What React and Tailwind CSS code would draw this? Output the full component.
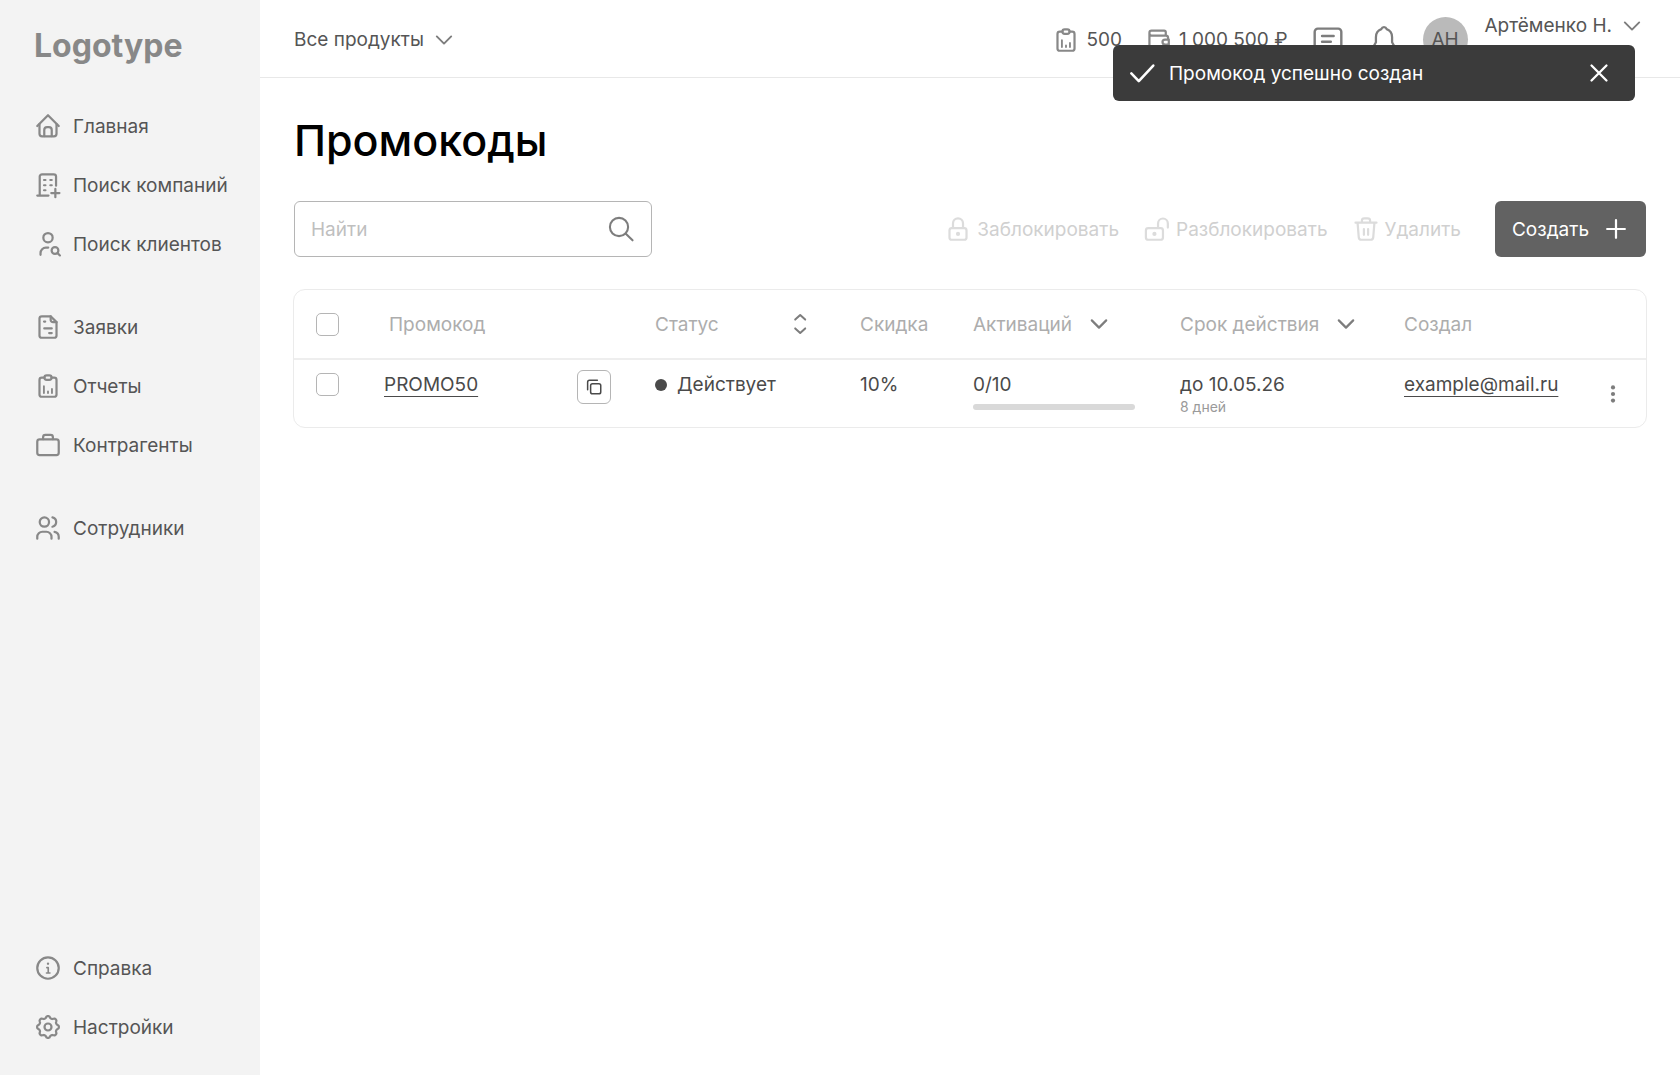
const GEAR_PATH = (() => {
    const points = [];
    for (let i = 0; i < 96; i++) {
        const angle = (i / 96) * Math.PI * 2;
        const radius = 8.5 + 0.9 * Math.tanh(1.6 * Math.cos(angle * 8));
        points.push(`${(12 + radius * Math.sin(angle)).toFixed(2)} ${(12 - radius * Math.cos(angle)).toFixed(2)}`);
    }
    return `M${points.join("L")}Z`;
})();

function Icon({ className = "size-7", strokeWidth = 1.9, children }) {
    return (
        <svg
            viewBox="0 0 24 24"
            fill="none"
            stroke="currentColor"
            strokeWidth={strokeWidth}
            strokeLinecap="round"
            strokeLinejoin="round"
            aria-hidden="true"
            className={`shrink-0 ${className}`}
        >
            {children}
        </svg>
    );
}

const HomeIcon = () => (
    <Icon>
        <path d="M2.8 12 12 2.8l9.2 9.2" />
        <path d="M4.7 10.4v8.2a2.2 2.2 0 0 0 2.2 2.2h10.2a2.2 2.2 0 0 0 2.2-2.2v-8.2" />
        <path d="M8.8 20.6v-5.2a2.4 2.4 0 0 1 2.4-2.4h1.6a2.4 2.4 0 0 1 2.4 2.4v5.2" />
    </Icon>
);

const CompanySearchIcon = () => (
    <Icon>
        <path d="M2.8 21.1h9.6M4.9 21V4.8a2 2 0 0 1 2-2h10a2 2 0 0 1 2 2v7.8" />
        <path d="M8.6 7.7h1.2M14 7.7h1.2M8.6 12.2h1.2M14 12.2h1.2M8.6 16.5h1.2" />
        <path d="M18.3 15.4v7M14.8 18.9h7" />
    </Icon>
);

const ClientSearchIcon = () => (
    <Icon>
        <circle cx="12" cy="6.6" r="4" />
        <path d="M5.6 21.3v-1.6a4.6 4.6 0 0 1 4.6-4.6h2" />
        <circle cx="18" cy="17.6" r="2.9" />
        <path d="m20.2 19.8 2 2" />
    </Icon>
);

const RequestIcon = () => (
    <Icon>
        <path d="M14.3 2.8H6.7a2 2 0 0 0-2 2v14.4a2 2 0 0 0 2 2h10.6a2 2 0 0 0 2-2V7.8z" />
        <path d="M14.3 2.8v3.1a2 2 0 0 0 2 2h3M8.6 7.3h1M8.8 13.2h6.4M13 17.2h2.2" />
    </Icon>
);

const ReportIcon = () => (
    <Icon>
        <path d="M9 4.8H6.7a2 2 0 0 0-2 2v12.4a2 2 0 0 0 2 2h10.6a2 2 0 0 0 2-2V6.8a2 2 0 0 0-2-2H15" />
        <rect x="8.9" y="2.8" width="6.2" height="4" rx="2" />
        <path d="M8.5 12.2V18M12 16.7V18M15.4 14.6V18" strokeWidth="1.6" />
    </Icon>
);

const BriefcaseIcon = () => (
    <Icon>
        <rect x="2.8" y="7.2" width="18.4" height="13.4" rx="2" />
        <path d="M7.8 7V5.4a2 2 0 0 1 2-2h4.4a2 2 0 0 1 2 2V7" />
    </Icon>
);

const StaffIcon = () => (
    <Icon>
        <circle cx="8.9" cy="6.9" r="4" />
        <path d="M2.8 21.2v-1.6a4.4 4.4 0 0 1 4.4-4.4h3.4a4.4 4.4 0 0 1 4.4 4.4v1.6M15.8 2.9a4.1 4.1 0 0 1 0 8M17.6 15.3a4.4 4.4 0 0 1 3.6 4.3v1.6" />
    </Icon>
);

const InfoIcon = () => (
    <Icon>
        <circle cx="12" cy="12" r="9.2" />
        <path d="M11 11.7h1.2v4.4M10.7 16.3h3" strokeWidth="1.4" />
        <circle cx="12" cy="8.3" r="1" fill="currentColor" stroke="none" />
    </Icon>
);

const SettingsIcon = () => (
    <Icon>
        <path d={GEAR_PATH} />
        <circle cx="12" cy="12" r="3" />
    </Icon>
);

const WalletIcon = () => (
    <Icon>
        <path d="M17.8 8.2V5.4a1.4 1.4 0 0 0-1.4-1.4H5.6A1.8 1.8 0 0 0 3.8 5.8v12.4a2 2 0 0 0 2 2h12a2 2 0 0 0 2-2V16M3.8 6.2a2 2 0 0 0 2 2h12a2 2 0 0 1 2 2v1" />
        <path d="M20.4 11.6h-3.2a2.2 2.2 0 0 0 0 4.4h3.2z" />
    </Icon>
);

const MessageIcon = () => (
    <Icon className="size-8.5" strokeWidth={1.7}>
        <path d="M4.8 4h14.4a2.2 2.2 0 0 1 2.2 2.2v9.6a2.2 2.2 0 0 1-2.2 2.2H9l-4.4 3.2V18a2 2 0 0 1-2-2V6.2A2.2 2.2 0 0 1 4.8 4z" />
        <path d="M7.8 9.2H16M7.8 13.2H14" />
    </Icon>
);

const BellIcon = () => (
    <Icon className="size-8.5" strokeWidth={1.6}>
        <path d="M12 2.9c1 0 1.6.6 1.9 1.4 2.2.8 3.8 3 3.8 5.7v3.6l1.9 3.4v1H4.4v-1l1.9-3.4V10c0-2.700 1.600-4.900 3.800-5.700.3-.8.9-1.400 1.900-1.400z" />
        <path d="M9.5 18.5a2.5 2.5 0 0 0 5 0" />
    </Icon>
);

const LockIcon = () => (
    <Icon>
        <rect x="4.7" y="11.2" width="14.6" height="10" rx="2" />
        <path d="M7.7 11V7.2a4.3 4.3 0 0 1 8.6 0V11" />
        <circle cx="12" cy="16.2" r="1.8" fill="currentColor" stroke="none" />
    </Icon>
);

const UnlockIcon = () => (
    <Icon>
        <rect x="2.5" y="11.2" width="14.6" height="10" rx="2" />
        <path d="M12.9 11V7.2a4.2 4.2 0 0 1 8.4 0v3.6" />
        <circle cx="9.8" cy="16.2" r="1.8" fill="currentColor" stroke="none" />
    </Icon>
);

const TrashIcon = () => (
    <Icon>
        <path d="M3 6.6h18M8.5 6.4V4.8a2 2 0 0 1 2-2h3a2 2 0 0 1 2 2v1.6M4.8 7l1 12.2a2.2 2.2 0 0 0 2.2 2h8a2.2 2.2 0 0 0 2.2-2l1-12.2M10.2 12v5M13.8 12v5" />
    </Icon>
);

const ChevronIcon = ({ className, strokeWidth = 1.9 }) => (
    <Icon className={className} strokeWidth={strokeWidth}>
        <path d="m4.8 8.4 7.2 7.2 7.2-7.2" />
    </Icon>
);

const navGroups = [
    [
        { label: "Главная", icon: HomeIcon },
        { label: "Поиск компаний", icon: CompanySearchIcon },
        { label: "Поиск клиентов", icon: ClientSearchIcon },
    ],
    [
        { label: "Заявки", icon: RequestIcon },
        { label: "Отчеты", icon: ReportIcon },
        { label: "Контрагенты", icon: BriefcaseIcon },
    ],
    [{ label: "Сотрудники", icon: StaffIcon }],
];

const footerNav = [
    { label: "Справка", icon: InfoIcon },
    { label: "Настройки", icon: SettingsIcon },
];

const bulkActions = [
    { label: "Заблокировать", icon: LockIcon },
    { label: "Разблокировать", icon: UnlockIcon },
    { label: "Удалить", icon: TrashIcon },
];

const promocodes = [
    {
        code: "PROMO50",
        status: "Действует",
        discount: "10%",
        used: 0,
        limit: 10,
        expires: "до 10.05.26",
        left: "8 дней",
        author: "example@mail.ru",
    },
];

function NavList({ items }) {
    return (
        <ul className="flex flex-col gap-[31px]">
            {items.map(({ label, icon: NavIcon }) => (
                <li key={label}>
                    <a href="#" className="flex items-center gap-[11px] text-[#555555]">
                        <span className="text-[#888888]">
                            <NavIcon />
                        </span>
                        <span className="whitespace-nowrap">{label}</span>
                    </a>
                </li>
            ))}
        </ul>
    );
}

function Sidebar() {
    return (
        <aside className="flex w-[260px] shrink-0 flex-col bg-[#f3f3f3] pt-6 pr-4 pb-[34px] pl-[34px]">
            <a href="#" className="text-[32px] leading-11 font-bold text-[#888888]">
                Logotype
            </a>
            <nav className="mt-11 flex flex-1 flex-col gap-[55px]">
                {navGroups.map((items) => (
                    <NavList key={items[0].label} items={items} />
                ))}
                <div className="mt-auto">
                    <NavList items={footerNav} />
                </div>
            </nav>
        </aside>
    );
}

function Header() {
    return (
        <header className="flex h-[78px] items-center justify-between border-b border-[#e8e8e8] pt-0.5 pr-9 pl-[34px] text-[#555555]">
            <button className="flex cursor-pointer items-center gap-2">
                Все продукты
                <ChevronIcon className="size-6 text-[#7d7d7d]" />
            </button>

            <div className="flex h-full items-center">
                <div className="flex items-center gap-[6px]">
                    <span className="text-[#888888]">
                        <ReportIcon />
                    </span>
                    500
                </div>
                <div className="ml-[23px] flex items-center gap-[6px]">
                    <span className="text-[#888888]">
                        <WalletIcon />
                    </span>
                    1 000 500 ₽
                </div>
                <button aria-label="Сообщения" className="ml-[23px] cursor-pointer text-[#7d7d7d]">
                    <MessageIcon />
                </button>
                <button aria-label="Уведомления" className="ml-[22px] cursor-pointer text-[#7d7d7d]">
                    <BellIcon />
                </button>
                <div className="ml-[22px] flex size-[45px] items-center justify-center rounded-full bg-[#bababa]">АН</div>
                <button className="ml-[17px] flex cursor-pointer items-center gap-2 self-start pt-[11px]">
                    Артёменко Н.
                    <ChevronIcon className="size-6 text-[#7d7d7d]" />
                </button>
            </div>
        </header>
    );
}

function Toast() {
    return (
        <div
            role="status"
            className="absolute top-[45px] right-[45px] flex h-14 w-[522px] items-center rounded-md bg-[#3b3b3b] px-4 text-white"
        >
            <Icon strokeWidth={2.2}>
                <path d="M2 12.4 8.4 19 20.8 5.6" />
            </Icon>
            <span className="ml-3">Промокод успешно создан</span>
            <button aria-label="Закрыть" className="mr-1.5 ml-auto cursor-pointer">
                <Icon strokeWidth={2}>
                    <path d="m5.6 5.6 12.8 12.8M18.4 5.6 5.6 18.4" />
                </Icon>
            </button>
        </div>
    );
}

function Toolbar() {
    return (
        <div className="mt-[31px] flex items-center justify-between">
            <div className="flex h-14 w-[358px] items-center justify-between rounded-md border border-[#b5b5b5] px-4">
                <input
                    type="search"
                    aria-label="Найти"
                    placeholder="Найти"
                    className="h-8 w-full min-w-0 flex-1 outline-none placeholder:text-[#bfbfbf]"
                />
                <Icon className="size-7 text-[#7d7d7d]" strokeWidth={1.8}>
                    <circle cx="10.3" cy="10.3" r="7.8" />
                    <path d="m15.9 15.9 6 5.8" />
                </Icon>
            </div>

            <div className="flex items-center gap-6">
                {bulkActions.map(({ label, icon: ActionIcon }) => (
                    <button key={label} disabled className="flex items-center gap-[5px] text-[#d0d0d0]">
                        <span className="text-[#dcdcdc]">
                            <ActionIcon />
                        </span>
                        {label}
                    </button>
                ))}
                <button className="ml-2.5 flex h-14 cursor-pointer items-center gap-[13px] rounded-md bg-[#626262] pr-4 pl-[17px] text-white">
                    Создать
                    <Icon strokeWidth={1.9}>
                        <path d="M12 4.4v15.2M4.4 12h15.2" />
                    </Icon>
                </button>
            </div>
        </div>
    );
}

function Checkbox({ label }) {
    return (
        <input
            type="checkbox"
            aria-label={label}
            className="block size-[23px] cursor-pointer appearance-none rounded-[5px] border border-[#b5b5b5] checked:bg-[#626262]"
        />
    );
}

function PromoTable() {
    return (
        <div className="-mx-px mt-8 overflow-hidden rounded-xl border border-[#ebebeb]">
            <table className="w-full table-fixed border-collapse text-left">
                <colgroup>
                    <col className="w-[90px]" />
                    <col className="w-[271px]" />
                    <col className="w-[205px]" />
                    <col className="w-[113px]" />
                    <col className="w-[207px]" />
                    <col className="w-[224px]" />
                    <col className="w-[195px]" />
                    <col className="w-[47px]" />
                </colgroup>
                <thead>
                    <tr className="h-[69px] border-b-2 border-[#eeeeee] text-[#adadad]">
                        <th className="pl-[22px] font-normal">
                            <Checkbox label="Выбрать все" />
                        </th>
                        <th className="pl-[5px] font-normal">Промокод</th>
                        <th className="font-normal">
                            <button className="flex w-[157px] cursor-pointer items-center justify-between">
                                Статус
                                <Icon className="size-6 text-[#7d7d7d]" strokeWidth={2}>
                                    <path d="m7.2 7.6 5-4.6 5 4.6M7.2 16.4l5 4.6 5-4.6" />
                                </Icon>
                            </button>
                        </th>
                        <th className="font-normal">Скидка</th>
                        <th className="font-normal">
                            <button className="flex cursor-pointer items-center gap-[15px]">
                                Активаций
                                <ChevronIcon className="size-6 text-[#7d7d7d]" strokeWidth={2.2} />
                            </button>
                        </th>
                        <th className="font-normal">
                            <button className="flex cursor-pointer items-center gap-[15px]">
                                Срок действия
                                <ChevronIcon className="size-6 text-[#7d7d7d]" strokeWidth={2.2} />
                            </button>
                        </th>
                        <th className="font-normal">Создал</th>
                        <th />
                    </tr>
                </thead>
                <tbody>
                    {promocodes.map((promo) => (
                        <tr key={promo.code} className="h-[68px] align-top text-[#4a4a4a]">
                            <td className="pt-[13px] pl-[22px]">
                                <Checkbox label={`Выбрать ${promo.code}`} />
                            </td>
                            <td className="pt-[10px]">
                                <div className="flex items-start justify-between pr-11">
                                    <a href="#" className="pt-0.5 underline decoration-1 underline-offset-5">
                                        {promo.code}
                                    </a>
                                    <button
                                        aria-label="Скопировать"
                                        className="flex size-[34px] cursor-pointer items-center justify-center rounded-md border border-[#b5b5b5]"
                                    >
                                        <Icon className="size-4.5" strokeWidth={2}>
                                            <rect x="7.5" y="7.5" width="13.5" height="13.5" rx="2.5" />
                                            <path d="M3.5 15.5v-10A2.5 2.5 0 0 1 6 3h10.5" />
                                        </Icon>
                                    </button>
                                </div>
                            </td>
                            <td className="pt-3">
                                <span className="flex items-center gap-[10px]">
                                    <span className="size-3 rounded-full bg-[#4a4a4a]" />
                                    {promo.status}
                                </span>
                            </td>
                            <td className="pt-3">{promo.discount}</td>
                            <td className="pt-3">
                                {promo.used}/{promo.limit}
                                <div className="mt-[7px] h-[6px] w-[162px] overflow-hidden rounded-full bg-[#d9d9d9]">
                                    <div
                                        className="h-full bg-[#626262]"
                                        style={{ width: `${(promo.used / promo.limit) * 100}%` }}
                                    />
                                </div>
                            </td>
                            <td className="pt-3">
                                {promo.expires}
                                <div className="text-sm leading-5 text-[#9a9a9a]">{promo.left}</div>
                            </td>
                            <td className="pt-3">
                                <a href="#" className="underline decoration-1 underline-offset-5">
                                    {promo.author}
                                </a>
                            </td>
                            <td className="align-middle">
                                <button aria-label="Действия" className="block cursor-pointer text-[#7d7d7d]">
                                    <svg viewBox="0 0 24 24" fill="currentColor" className="size-7" aria-hidden="true">
                                        <circle cx="12" cy="6.4" r="1.8" />
                                        <circle cx="12" cy="12" r="1.8" />
                                        <circle cx="12" cy="17.6" r="1.8" />
                                    </svg>
                                </button>
                            </td>
                        </tr>
                    ))}
                </tbody>
            </table>
        </div>
    );
}

export default function App() {
    return (
        <div className="relative flex min-h-screen bg-white font-['Inter',sans-serif] text-[19px] leading-[25px]">
            <Sidebar />
            <div className="min-w-0 flex-1">
                <Header />
                <main className="px-[34px] pt-8">
                    <h1 className="text-[43px] leading-[60px] font-medium text-black">Промокоды</h1>
                    <Toolbar />
                    <PromoTable />
                </main>
            </div>
            <Toast />
        </div>
    );
}
